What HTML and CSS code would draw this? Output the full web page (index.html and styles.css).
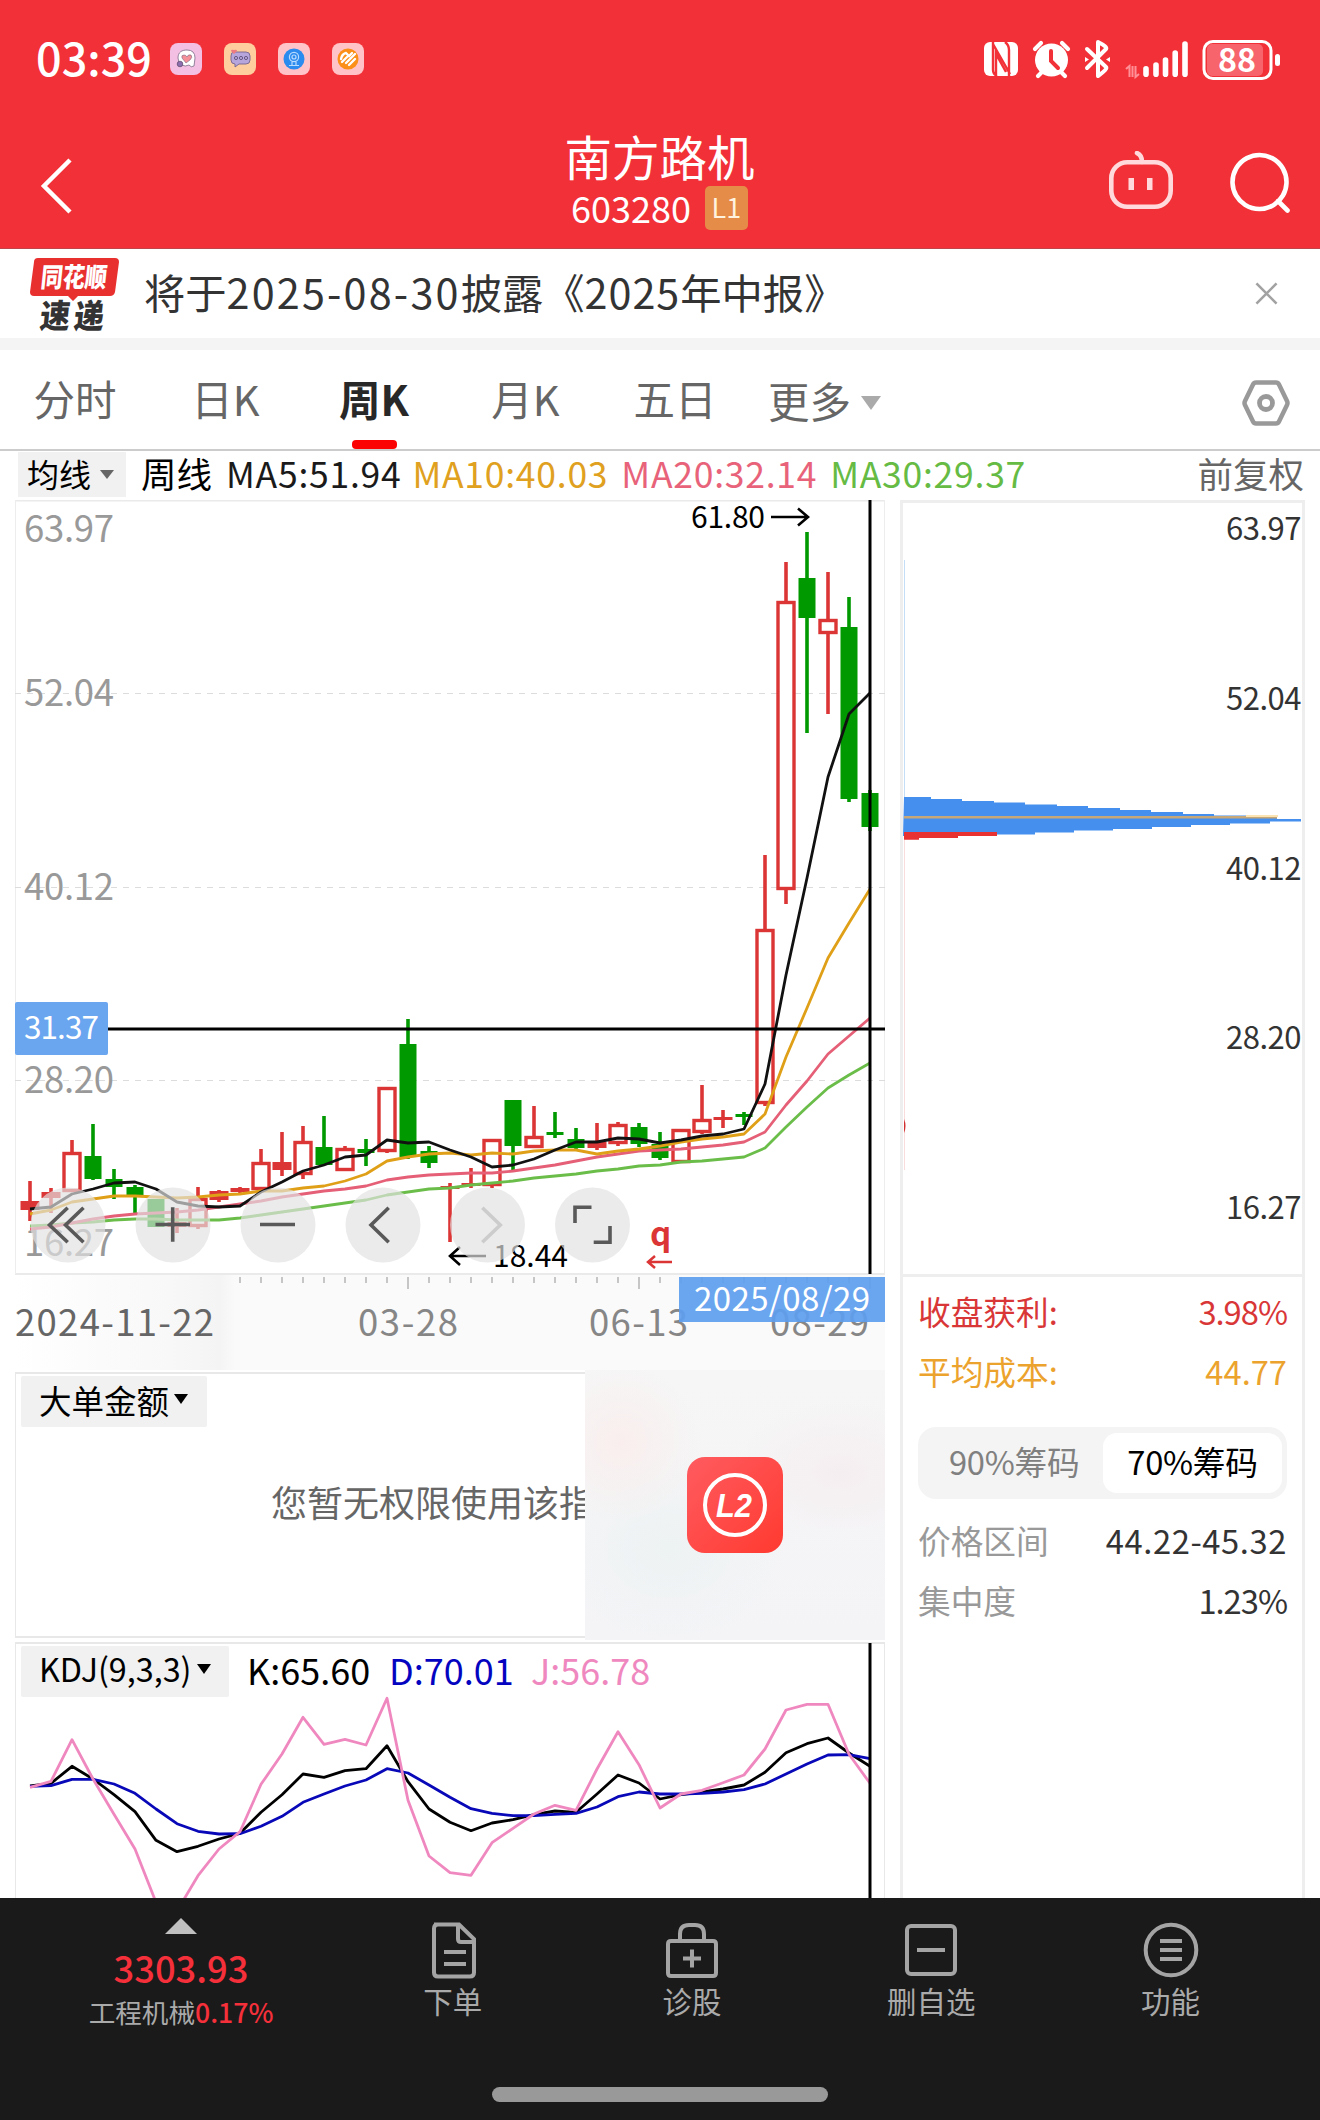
FILE: index.html
```html
<!DOCTYPE html>
<html lang="zh-CN">
<head>
<meta charset="utf-8">
<title>南方路机 603280</title>
<link rel="stylesheet" href="styles.css">
</head>
<body>
<div class="page">
  <header class="header">
    <div class="status">
      <span class="clock">03:39</span>
      <div class="apps">
        <svg class="app" viewBox="0 0 32 32"><rect width="32" height="32" rx="8" fill="#f3bfe3"/><path d="M8 15C8 9 12 7 17 7q8 0 8 8l-1 8q-3 2-5-1-4 2-7 0-4-2-4-7z" fill="#fff" stroke="#7b6a86" stroke-width=".8"/><path d="M16 20l-4-5q-1-3 2-3 2 0 3 2 1-3 4-2 2 2-1 5z" fill="#f58f98" stroke="#7b6a86" stroke-width=".6"/><circle cx="10" cy="21" r="2.800" fill="#8d6fb0" stroke="#59476b" stroke-width=".7"/></svg>
        <svg class="app" viewBox="0 0 32 32"><rect width="32" height="32" rx="8" fill="#ffce9e"/><path d="M10 9h12q4 0 4 4v4q0 4-4 4h-7l-4 3v-3q-4 0-4-4v-4q0-4 3-4z" fill="#b7a6dc" stroke="#75658f" stroke-width=".9"/><g fill="none" stroke="#5f5078" stroke-width=".9"><circle cx="12" cy="15" r="1.6"/><circle cx="17" cy="15" r="1.6"/><circle cx="22" cy="15" r="1.6"/></g><path d="M10 11L7 8q0-2 3-1 3-1 3 1z" fill="#ee7b80"/></svg>
        <svg class="app" viewBox="0 0 32 32"><rect width="32" height="32" rx="8" fill="#ffc3c8"/><circle cx="16" cy="16" r="10.500" fill="#2c8bee"/><g fill="none" stroke="#b9dcff" stroke-width="1.200"><circle cx="16" cy="14" r="4.600"/><circle cx="16" cy="14" r="2"/><path d="M14 19v3M18 19v3M11 22.500h10"/></g></svg>
        <svg class="app" viewBox="0 0 32 32"><rect width="32" height="32" rx="8" fill="#ffc3c8"/><circle cx="16" cy="16" r="10.500" fill="#fb8f17"/><path d="M9 16q1-5 5-6l3 3 3-3M10 19l5-5M14 20l9-9M17 22l6-6" fill="none" stroke="#fff" stroke-width="2.400" stroke-linecap="round"/></svg>
      </div>
      <svg class="status-icons" viewBox="980 36 304 46">
        <rect x="984" y="42" width="34" height="34" rx="6" fill="#fff"/>
        <path d="M993 42v28q0 4 4 6M993 44l17 30M1009 76V50q0-5-4-8M996 76V54l10 18" fill="none" stroke="#f23037" stroke-width="2.4"/>
        <circle cx="1051.500" cy="60" r="16.500" fill="#fff"/><path d="M1051 51v10l7 7" fill="none" stroke="#f23037" stroke-width="4" stroke-linecap="round"/>
        <path d="M1035 49l6-6M1068 49l-6-6M1041 73l-3 3M1062 73l3 3" stroke="#fff" stroke-width="4.200" stroke-linecap="round"/>
        <path d="M1087 49l19 18q2 2-8 9V42q10 5 8 7l-19 19" fill="none" stroke="#fff" stroke-width="4" stroke-linejoin="round" stroke-linecap="round"/>
        <path d="M1085 57l4 2.500-4 2.500zM1110 57l-4 2.500 4 2.500z" fill="#fff"/>
        <path d="M1126 69l3.500-3v11M1139 74l-3.500 3V66M1132.500 66v11" fill="none" stroke="#ff9097" stroke-width="2"/>
        <g stroke="#fff" stroke-width="5.600" stroke-linecap="round"><path d="M1146 68.800v5.400M1156 65v9.200M1165.500 60v14.200M1175.200 53v21.200M1185 44v30.200"/></g>
        <rect x="1207" y="44" width="56" height="32" rx="5" fill="#f7646b"/>
        <rect x="1204" y="41.500" width="67" height="37" rx="9" fill="none" stroke="#fff" stroke-width="3"/>
        <rect x="1275" y="54" width="5" height="12" rx="2.500" fill="#fff"/>
        <text x="1218" y="72" class="bat" textLength="38" lengthAdjust="spacingAndGlyphs">88</text>
      </svg>
    </div>
    <div class="titlebar">
      <svg class="back" viewBox="0 0 36 60"><path d="M32 4L6 30l26 26" fill="none" stroke="#fff" stroke-width="4.500"/></svg>
      <div class="title">
        <h1>南方路机</h1>
        <div class="code"><span>603280</span><b>L1</b></div>
      </div>
      <svg class="robot" viewBox="0 0 64 58"><g fill="none" stroke="#ffd9db" stroke-width="4.600"><rect x="2.300" y="11.300" width="59.400" height="44.400" rx="16"/><path d="M28 2q5 2 5 9" stroke-linecap="round"/></g><path d="M19.500 27h5.500v12h-5.500zM38 27h5.500v12H38z" fill="#ffd9db"/></svg>
      <svg class="search" viewBox="0 0 62 62"><path d="M30.500 3a27 27 0 1 0 .01 0zM49 49l9.500 9.500" fill="none" stroke="#fff" stroke-width="4.600" stroke-linecap="round"/></svg>
    </div>
  </header>

  <section class="notice">
    <svg class="logo" viewBox="0 0 92 76"><path d="M8 2h77q4 0 4 4l-4 30q-1 4-5 4H48l-5 5-5-5H4q-4 0-4-4L4 6q0-4 4-4z" fill="#e8302f"/><text x="10" y="31" class="logo-a" textLength="66" lengthAdjust="spacingAndGlyphs">同花顺</text><text x="9" y="72" class="logo-b" textLength="30" lengthAdjust="spacingAndGlyphs">速</text><text x="43" y="72" class="logo-b" textLength="30" lengthAdjust="spacingAndGlyphs">递</text></svg>
    <p>将于<span class="date">2025-08-30</span>披露《<span class="year">2025</span>年中报》</p>
    <svg class="close" viewBox="0 0 24 24"><path d="M1.500 1.500l21 21M22.500 1.500l-21 21" stroke="#a2a2a2" stroke-width="2.700"/></svg>
  </section>

  <nav class="tabs">
    <span>分时</span><span class="shift">日K</span><span class="on">周K</span><span class="shift">月K</span><span>五日</span><span class="more">更多<i class="tri"></i></span>
    <svg class="gear" viewBox="0 0 48 46"><path d="M14 2.500h20q2 0 3 2l8 16.500q1 2 0 4l-8 16.500q-1 2-3 2H14q-2 0-3-2L3 25q-1-2 0-4l8-16.500q1-2 3-2z" fill="none" stroke="#999" stroke-width="4.500"/><circle cx="24" cy="23" r="6.500" fill="none" stroke="#999" stroke-width="4.800"/></svg>
  </nav>

  <div class="ma-row">
    <span class="chip">均线<i class="tri"></i></span>
    <span class="ma black week">周线</span><span class="ma dark m5">MA5:51.94</span><span class="ma orange">MA10:40.03</span><span class="ma pink">MA20:32.14</span><span class="ma green">MA30:29.37</span>
    <span class="adj">前复权</span>
  </div>

  <main class="main">
    <div class="left">
      <svg class="kline" id="kline" viewBox="15 500 870 870">
        <defs><linearGradient id="fade"><stop offset="0" stop-color="#fff"/><stop offset=".7" stop-color="#f8f8f8"/><stop offset=".93" stop-color="#f4f4f4"/><stop offset="1" stop-color="#fafafa"/></linearGradient></defs>
        <rect x="15" y="1275" width="870" height="95" fill="#fafafa"/>
        <rect x="15" y="1275" width="220" height="95" fill="url(#fade)"/>
        <path d="M15 500.500h870M15 1274h870" stroke="#eaeaea" stroke-width="2"/>
        <path d="M15.500 500v774M884.500 500v774" stroke="#ededed"/>
        <path d="M15 693.500h870M15 887.500h870M15 1080.500h870" stroke="#dcdcdc" stroke-dasharray="6 6"/>
        <g class="price">
          <text x="24" y="542" textLength="90">63.97</text><text x="24" y="706" textLength="90">52.04</text><text x="24" y="900" textLength="90">40.12</text><text x="24" y="1093" textLength="90">28.20</text><text x="24" y="1256" textLength="90">16.27</text>
        </g>
        <g id="candles"></g>
        <g id="averages"></g>
        <g class="mark"><text x="691" y="528" textLength="74">61.80</text><path d="M771 517h37M798 508.500l10 8.500-10 8.500"/>
          <text x="493" y="1267" textLength="75">18.44</text><path d="M486 1256h-36M460 1247l-10 9 10 9"/></g>
        <path d="M108 1029h777M870 500v774" stroke="#000" stroke-width="3"/>
        <path id="ticks" fill="none" stroke="#c6c6c6" stroke-width="2"/>
        <g class="dates"><text x="15" y="1336" fill="#666" textLength="199">2024-11-22</text><text x="358" y="1336" textLength="100">03-28</text><text x="589" y="1336" textLength="99">06-13</text><text x="770" y="1336" textLength="99">08-29</text></g>
        <g fill="#e2e2e2" fill-opacity=".68"><circle cx="68" cy="1225" r="37.500"/><circle cx="173" cy="1225" r="37.500"/><circle cx="278" cy="1225" r="37.500"/><circle cx="383" cy="1225" r="37.500"/><circle cx="487.500" cy="1225" r="37.500"/><circle cx="592.500" cy="1225" r="37.500"/></g>
        <g fill="none" stroke="#595959" stroke-width="3.600"><path d="M67.700 1207.700L49.500 1225l18.200 17.300M83.500 1207.700L65.500 1225l18 17.300M155.500 1224.500h34.500M172.700 1207.300v34.500M260 1224.500h35M388.700 1207.700L371 1225l17.700 17.300M575 1223v-15.700h16.500M593.700 1242.300H610V1226"/><path d="M482.300 1207.700l18 17.300-18 17.300" stroke="#ccc"/></g>
        <text x="650" y="1246" class="q">q</text><path d="M672 1262h-24M655 1256l-7 6 7 6" fill="none" stroke="#dc3535" stroke-width="2.500"/>
        <rect x="15" y="1002" width="93" height="53" rx="2" fill="#6aa5f0"/><text x="24" y="1039" class="tag" textLength="75">31.37</text>
        <rect x="679" y="1277" width="206" height="45" fill="#5f9eee" fill-opacity=".93"/><text x="694" y="1311" class="tag big" textLength="176">2025/08/29</text>
      </svg>
      <section class="panel flow">
        <span class="chip2">大单金额<i class="tri"></i></span>
        <p class="denied">您暂无权限使用该指标</p>
        <div class="l2">
          <svg viewBox="0 0 96 96"><defs><linearGradient id="rg" x2="1" y2="1"><stop stop-color="#ff5b60"/><stop offset="1" stop-color="#ff3a30"/></linearGradient></defs><rect width="96" height="96" rx="18" fill="url(#rg)"/><circle cx="48" cy="48" r="30" fill="none" stroke="#fff" stroke-width="4"/><text x="29" y="60" class="l2t" textLength="36" lengthAdjust="spacingAndGlyphs">L2</text></svg>
        </div>
      </section>
      <section class="panel kdj">
        <div class="kdj-head"><span class="chip2">KDJ(9,3,3)<i class="tri"></i></span><span class="k">K:65.60</span><span class="d">D:70.01</span><span class="j">J:56.78</span></div>
        <svg class="kdj-chart" viewBox="15 1643 870 255"><g id="kdj" fill="none" stroke-width="3"></g><path d="M870 1643v255" stroke="#000" stroke-width="3"/></svg>
      </section>
    </div>
    <aside class="right">
      <svg class="chips" viewBox="900 500 405 777">
        <path d="M900 1275.500h405" stroke="#eee" stroke-width="3"/>
        <path d="M904.500 560v237" stroke="#c5def8"/><path d="M904.500 840v330" stroke="#f9dcdc"/><path d="M904 1119q3 7 0 14z" fill="#d03030"/>
        <path d="M904 797h27v2h31v2h32v1.500h31v2h32v1.500h31v2h32v2h31v2h32v2h31v1.500h32v2h31v1.500h24v2.500h-31v2h-40v1.500h-39v2h-39v2h-39v1.500h-39v2h-39v2h-39v1.500h-93z" fill="#458fee"/>
        <path d="M904 832h93v4h-39v2h-39v1.700h-15z" fill="#e83232"/>
        <path d="M904 817.300h373" stroke="#c6a878" stroke-width="2.400"/><path d="M1246 816h32" stroke="#fbe3b2" stroke-width="2"/>
        <g class="scale"><text x="1301" y="540">63.97</text><text x="1301" y="710">52.04</text><text x="1301" y="880">40.12</text><text x="1301" y="1049">28.20</text><text x="1301" y="1219">16.27</text></g>
      </svg>
      <div class="info">
        <div class="row red"><span>收盘获利:</span><span class="pct">3.98%</span></div>
        <div class="row gold"><span>平均成本:</span><span>44.77</span></div>
        <div class="seg"><span>90%筹码</span><span class="act">70%筹码</span></div>
        <div class="row"><span>价格区间</span><em>44.22-45.32</em></div>
        <div class="row"><span>集中度</span><em class="pct">1.23%</em></div>
      </div>
    </aside>
  </main>

  <footer class="bottom">
    <div class="index"><i class="up"></i><strong>3303.93</strong><span>工程机械<b>0.17%</b></span></div>
    <div class="item"><svg viewBox="0 0 60 60"><path d="M11 4.500h25L51 19v33.500q0 4-4 4H15q-4 0-4-4v-44q0-4 4-4zM35 5v14q0 3 3 3h12M21 32h22M21 44h22"/></svg><span>下单</span></div>
    <div class="item"><svg viewBox="0 0 60 60"><path d="M9 21h42q3 0 3 3v29q0 3-3 3H9q-3 0-3-3V24q0-3 3-3zM18 20v-6q0-9 9-9h6q9 0 9 9v6M21 38.500h18M30 29.500v18"/></svg><span>诊股</span></div>
    <div class="item"><svg viewBox="0 0 60 60"><rect x="6" y="6" width="48" height="48" rx="4"/><path d="M16 30h28"/></svg><span>删自选</span></div>
    <div class="item"><svg viewBox="0 0 60 60"><circle cx="30" cy="30" r="25.300"/><path d="M19 21h22M19 30h22M19 39h22"/></svg><span>功能</span></div>
    <i class="home"></i>
  </footer>
</div>
<script src="chart.js"></script>
</body>
</html>
```

FILE: styles.css
```css
* { box-sizing: border-box; margin: 0; padding: 0; }
body { background: #fff; font-family: "Noto Sans CJK SC", "Noto Sans", sans-serif; color: #333; }
svg { display: block; flex: none; }
i, em { font-style: normal; }
.page { width: 1320px; height: 2120px; overflow: hidden; display: flex; flex-direction: column; white-space: nowrap; }

.header { height: 249px; background: #f23037; color: #fff; border-bottom: 1px solid #c04449; }
.status { height: 117px; padding: 0 36px; display: flex; align-items: center; }
.clock { font-size: 45px; font-weight: 500; line-height: 60px; width: 134px; margin-top: -4px; }
.apps { display: flex; gap: 22px; }
.app { width: 32px; height: 32px; }
.status-icons { width: 304px; height: 46px; margin-left: auto; }
.bat { font-size: 32px; font-weight: 700; fill: #fff; }
.titlebar { height: 131px; display: flex; align-items: center; position: relative; padding: 7px 29px 0 38px; }
.back { width: 36px; height: 60px; }
.title { flex: 1; padding-left: 136px; margin-top: -13px; display: flex; flex-direction: column; align-items: center; }
.title h1 { font-size: 47.5px; font-weight: 400; line-height: 56px; }
.code { display: flex; align-items: center; gap: 14px; height: 46px; font-size: 36px; margin-top: 1px; }
.code span { margin-top: -2px; }
.code b { width: 43px; height: 44px; line-height: 42px; border-radius: 5px; background: #e48c48; color: #fff3df; font-weight: 400; font-size: 27px; text-align: center; }
.robot { width: 64px; height: 58px; margin-right: 56px; margin-top: -13px; }
.search { width: 62px; height: 62px; margin-top: -6px; }

.notice { height: 89px; display: flex; align-items: center; padding: 0 42px 0 30px; }
.logo { width: 92px; height: 76px; overflow: visible; }
.logo-a, .logo-b { font-weight: 900; transform: skewX(-6deg); }
.logo-a { font-size: 27px; fill: #fff; transform-origin: 9px 31px; }
.logo-b { font-size: 33px; fill: #333; transform-origin: 9px 72px; }
.notice p { font-size: 41.3px; line-height: 60px; margin: -6px 0 0 22px; color: #333; }
.date { letter-spacing: 2.2px; }
.year { letter-spacing: 1px; }
.close { width: 23px; height: 23px; margin-left: auto; }

.tabs { height: 113px; border-top: 12px solid #f4f4f4; border-bottom: 2px solid #ccc; display: flex; align-items: center; font-size: 41.5px; color: #666; padding-right: 30px; }
.tabs > span { width: 150px; height: 99px; line-height: 96px; text-align: center; }
.tabs .shift { padding-left: 1px; }
.tabs .on { color: #282828; font-weight: 700; display: flex; flex-direction: column; align-items: center; justify-content: space-between; padding-right: 2px; }
.tabs .on::after { content: ""; flex: none; width: 45px; height: 9px; border-radius: 4px; background: #fb0303; margin-top: -6px; }
.tabs .more { display: flex; align-items: center; gap: 10px; padding-left: 18px; }
.tri { width: 0; height: 0; border: solid transparent; border-width: 10px 7px 0; border-top-color: #000; }
.more .tri { border-width: 14px 10px 0; border-top-color: #aaa; margin-top: 6px; }
.gear { width: 48px; height: 46px; margin-left: auto; margin-top: 6px; }

.ma-row { height: 49px; display: flex; align-items: center; padding: 0 16px 0 18px; font-size: 35.5px; }
.chip { width: 108px; height: 45px; margin-bottom: 3px; background: #f1f1f1; color: #000; font-size: 32px; line-height: 42px; display: flex; align-items: center; gap: 9px; padding: 0 0 3px 9px; margin-right: 15px; }
.chip .tri { border-top-color: #666; margin-top: 4px; border-width: 9px 7px 0; }
.ma { margin-right: 13px; letter-spacing: .75px; line-height: 45px; margin-top: -7px; }
.week { letter-spacing: 0; }
.m5 { margin-left: 1px; margin-right: 11px; }
.orange { color: #e0a020; }
.pink { color: #e8637a; }
.green { color: #66bb44; }
.dark { color: #1a1a1a; }
.black { color: #000; }
.adj { margin-left: auto; margin-top: -7px; color: #666; }

.main { height: 1398px; display: grid; grid-template-columns: 870px 405px; gap: 15px; padding-left: 15px; overflow: hidden; }
.left { display: flex; flex-direction: column; }
.kline { width: 870px; height: 870px; }
.price text { font-size: 36.5px; fill: #999; }
.mark text { font-size: 30px; fill: #000; }
.mark path { fill: none; stroke: #000; stroke-width: 2.6; }
.dates { font-size: 36.5px; fill: #868686; }
.tag { font-size: 31.5px; fill: #fff; }
.tag.big { font-size: 33px; }
.q { font-size: 33px; font-weight: 700; fill: #dc3535; }

.panel { position: relative; border: 1px solid #e8e8e8; border-top-width: 2px; }
.flow { height: 266px; margin: 2px 0 4px; border-bottom-width: 2px; padding: 2px 0 0 5px; }
.chip2 { display: inline-flex; align-items: center; height: 51px; line-height: 45px; background: #f1f1f1; border-radius: 2px; color: #000; font-size: 32.5px; padding: 0 19px 5px 18px; gap: 5px; }
.denied { margin: 44px 0 0 250px; font-size: 36px; line-height: 60px; color: #666; width: 314px; overflow: hidden; }
.l2 { position: absolute; left: 569px; top: -4px; width: 300px; height: 270px; display: flex; align-items: center; justify-content: center;
  background: radial-gradient(circle at 12% 27%, #f9eeed 0, transparent 24%), radial-gradient(ellipse at 85% 38%, #f5eef0 0, transparent 30%), radial-gradient(ellipse at 28% 66%, #edf2f3 0, transparent 38%), linear-gradient(#f6f6f6, #f4f4f7); }
.l2 svg { width: 96px; height: 96px; }
.l2t { font: italic 700 33px "Liberation Sans", sans-serif; fill: #fff; }
.kdj { height: 256px; border-bottom: 0; }
.kdj-head { display: flex; align-items: center; padding: 1px 0 0 5px; font-size: 36px; height: 53px; line-height: 48px; }
.kdj-head .chip2 { width: 208px; margin-right: 18px; padding-right: 0; font-size: 32.3px; }
.kdj-head .k, .kdj-head .d, .kdj-head .j { margin-top: -4px; width: 142px; }
.kdj-head .k { color: #000; }
.kdj-head .d { color: #0404c0; }
.kdj-head .j { color: #f088c0; }
.kdj-chart { position: absolute; left: -1px; top: -1px; width: 870px; height: 255px; }

.right { display: flex; flex-direction: column; border: 3px solid #eee; border-bottom: 0; }
.chips { width: 405px; height: 777px; margin: -3px -3px 0; }
.scale text { font-size: 31px; fill: #333; text-anchor: end; letter-spacing: -.5px; }
.info { padding: 3px 15px 0 15px; font-size: 32.7px; color: #333; }
.row { height: 60px; display: flex; justify-content: space-between; align-items: center; color: #999; }
.row em { color: #333; letter-spacing: .6px; }
.row .pct { letter-spacing: -1px; }
.row.red { color: #d93737; }
.row.gold { color: #eca32e; }
.seg { height: 72px; margin: 27px 0 10px; width: 369px; display: flex; align-items: center; justify-content: space-between; background: #f4f4f4; border-radius: 18px; padding: 0 5px 0 31px; color: #808080; }
.seg span { height: 60px; line-height: 56px; letter-spacing: -.3px; }
.seg .act { width: 179px; background: #fff; border-radius: 14px; color: #000; text-align: center; }

.bottom { height: 222px; background: #1a1a1a; display: grid; grid-template-columns: 333px repeat(4, 239.3px); grid-template-rows: 189px 15px; color: #aaa; }
.index { padding: 20px 0 0 29px; display: flex; flex-direction: column; align-items: center; font-size: 26.6px; }
.up { border: solid transparent; border-width: 0 16px 16px; border-bottom-color: #c0c0c0; }
.index strong { color: #f5303b; font-size: 36.3px; font-weight: 500; line-height: 50px; margin-top: 8px; }
.index span { line-height: 36px; margin-top: 2px; }
.index b { color: #f5303b; font-weight: 500; }
.item { display: flex; flex-direction: column; align-items: center; padding-top: 22px; font-size: 29.5px; }
.item svg { width: 60px; height: 60px; fill: none; stroke: #a4a4a4; stroke-width: 4; }
.item span { line-height: 40px; }
.home { grid-column: 1 / -1; width: 336px; height: 15px; margin-left: 492px; border-radius: 7.5px; background: #999; }
```

FILE: chart.js
```js
const NS = "http://www.w3.org/2000/svg";
const X = i => 30 + i * 21;

function add(parent, tag, attrs) {
  const el = document.createElementNS(NS, tag);
  for (const k in attrs) el.setAttribute(k, attrs[k]);
  parent.appendChild(el);
}

// direction, high, body top, body bottom, low
const candles = [
  ["r",1181,1201,1210,1221],["r",1188,1192,1198,1213],["r",1140,1152,1192,1192],["g",1124,1156,1179,1180],
  ["g",1169,1179,1187,1199],["g",1185,1187,1197,1213],["g",1199,1199,1227,1227],["r",1208,1222,1227,1233],
  ["r",1187,1198,1227,1229],["r",1190,1191,1200,1202],["r",1187,1188,1192,1193],["r",1149,1162,1190,1190],
  ["r",1132,1162,1170,1176],["r",1126,1141,1175,1179],["g",1116,1147,1165,1165],["r",1146,1148,1171,1171],
  ["g",1139,1149,1153,1166],["r",1087,1087,1152,1153],["g",1019,1044,1157,1159],["g",1146,1151,1163,1168],
  ["r",1183,1186,1189,1242],["r",1168,1183,1186,1188],["r",1139,1139,1186,1188],["g",1100,1100,1146,1170],
  ["r",1106,1136,1148,1148],["g",1112,1132,1135,1138],["g",1128,1139,1148,1150],["r",1123,1142,1148,1150],
  ["r",1122,1124,1144,1146],["g",1123,1127,1144,1147],["g",1132,1144,1158,1160],["r",1129,1129,1163,1163],
  ["r",1085,1119,1133,1134],["r",1110,1117,1119,1128],["g",1112,1114,1117,1125],["r",855,929,1104,1106],
  ["r",562,601,890,904],["g",532,578,618,733],["r",572,619,634,714],["g",597,627,799,802],["g",790,793,827,831]
];
const cg = document.getElementById("candles");
candles.forEach(([dir, hi, top, bot, lo], i) => {
  const x = X(i), color = dir === "r" ? "#dc3535" : "#009900";
  if (hi < top) add(cg, "path", { d: `M${x} ${hi}V${top}`, stroke: color, "stroke-width": 3.6 });
  if (lo > bot) add(cg, "path", { d: `M${x} ${bot}V${lo}`, stroke: color, "stroke-width": 3.6 });
  if (dir === "g") add(cg, "rect", { x: x - 8.5, y: top, width: 17, height: bot - top, fill: color });
  else if (bot - top < 10) add(cg, "rect", { x: x - 9.5, y: top, width: 19, height: Math.max(3, bot - top), fill: color });
  else add(cg, "rect", { x: x - 8, y: top + 1.5, width: 16, height: bot - top - 3, fill: "#fff", stroke: color, "stroke-width": 3.4 });
});

function line(parent, ys, color) {
  add(parent, "polyline", { points: ys.map((y, i) => X(i) + "," + y).join(" "), stroke: color, fill: "none", "stroke-width": 2.8, "stroke-linejoin": "round" });
}
const av = document.getElementById("averages");
line(av, [1226,1225,1223,1222,1220,1219,1219,1220,1220,1220,1218,1215,1212,1209,1206,1203,1200,1195,1192,1189,1188,1185,1183,1181,1178,1176,1174,1171,1169,1166,1165,1162,1161,1159,1157,1148,1127,1107,1088,1075,1063], "#6bbd4a");
line(av, [1229,1227,1223,1219,1216,1214,1213,1212,1210,1207,1204,1201,1197,1194,1191,1189,1186,1180,1177,1175,1174,1173,1173,1171,1168,1165,1161,1157,1154,1151,1150,1149,1147,1145,1142,1132,1105,1081,1054,1036,1018], "#e55f76");
line(av, [1214,1210,1202,1199,1196,1196,1197,1198,1197,1195,1194,1191,1191,1188,1186,1181,1174,1161,1157,1154,1153,1155,1153,1154,1151,1150,1150,1154,1151,1149,1146,1142,1139,1137,1134,1114,1057,1008,958,923,889], "#dfa018");
line(av, [1209,1207,1194,1189,1183,1182,1189,1202,1206,1207,1206,1192,1182,1171,1165,1157,1155,1140,1143,1142,1150,1157,1167,1165,1159,1150,1142,1142,1138,1139,1143,1140,1136,1134,1129,1084,975,878,777,714,693], "#111");

let ticks = "";
for (let i = 10; i <= 40; i++) ticks += `M${X(i)} 1277v${[18, 29, 40].includes(i) ? 12 : 6}`;
document.getElementById("ticks").setAttribute("d", ticks);

// KDJ series are stored as thirds of a pixel below y = 1630
const kg = document.getElementById("kdj");
const scale = ys => ys.map(y => (1629 + y / 3).toFixed(1));
line(kg, scale([471,463,412,450,497,548,634,668,652,630,613,550,497,435,445,425,419,350,458,540,580,605,582,572,557,546,550,495,438,462,510,497,489,480,468,430,371,344,327,372,412]), "#000");
line(kg, scale([472,470,451,451,465,493,540,584,607,615,614,592,562,520,495,471,453,419,432,468,505,539,553,560,560,556,553,534,503,489,495,495,493,489,482,465,435,405,378,377,389]), "#0808b8");
line(kg, scale([475,457,332,450,556,660,820,846,740,660,608,466,375,265,346,331,348,208,514,681,731,739,641,598,555,529,544,420,308,407,537,495,484,461,438,360,243,226,226,376,463]), "#f088c0");
```
